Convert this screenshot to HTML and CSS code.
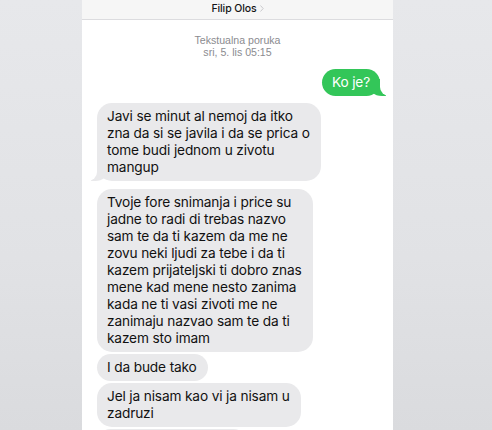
FILE: index.html
```html
<!DOCTYPE html>
<html lang="hr">
<head>
<meta charset="utf-8">
<title>Filip Olos</title>
<link rel="stylesheet" href="styles.css">
</head>
<body>
<div class="screen">
  <div class="panel">
    <header class="topbar">
      <span class="name">Filip Olos</span>
      <svg class="chev" width="4" height="7" viewBox="0 0 4 7"><path d="M0.5 0.5 L3.2 3.5 L0.5 6.5" fill="none" stroke="#c4c4c8" stroke-width="0.9"/></svg>
    </header>
    <div class="stamp">
      <div>Tekstualna poruka</div>
      <div>sri, 5. lis 05:15</div>
    </div>
    <div class="row out">
      <div class="bubble green tail-right">Ko je?</div>
    </div>
    <div class="row in first">
      <div class="bubble gray tail-left">Javi se minut al nemoj da itko<br>zna da si se javila i da se prica o<br>tome budi jednom u zivotu<br>mangup</div>
    </div>
    <div class="row in first">
      <div class="bubble gray">Tvoje fore snimanja i price su<br>jadne to radi di trebas nazvo<br>sam te da ti kazem da me ne<br>zovu neki ljudi za tebe i da ti<br>kazem prijateljski ti dobro znas<br>mene kad mene nesto zanima<br>kada ne ti vasi zivoti me ne<br>zanimaju nazvao sam te da ti<br>kazem sto imam</div>
    </div>
    <div class="row in">
      <div class="bubble gray">I da bude tako</div>
    </div>
    <div class="row in">
      <div class="bubble gray">Jel ja nisam kao vi ja nisam u<br>zadruzi</div>
    </div>
    <div class="row in">
      <div class="bubble gray stub"></div>
    </div>
  </div>
</div>
</body>
</html>
```

FILE: styles.css
```css
* { box-sizing: border-box; }
html, body {
  margin: 0;
  padding: 0;
  height: 430px;
  overflow: hidden;
}
body {
  background: linear-gradient(180deg, #e7e8eb 0%, #e1e2e5 60%, #dadbde 100%);
  font-family: "Liberation Sans", Arial, sans-serif;
}
.screen {
  display: flex;
  padding-left: 82px;
  height: 430px;
}
.panel {
  width: 311px;
  height: 430px;
  background: #ffffff;
  display: flex;
  flex-direction: column;
  overflow: hidden;
}
.topbar {
  height: 20px;
  flex: none;
  background: #f6f6f6;
  border-bottom: 1px solid #dcdcdf;
  display: flex;
  align-items: center;
  justify-content: center;
  gap: 3px;
  padding-bottom: 3px;
}
.name {
  font-family: Inter, "Liberation Sans", sans-serif;
  font-size: 10.5px;
  font-weight: 500;
  color: #151515;
  letter-spacing: -0.1px;
}
.chev { display: block; margin-top: 1px; }
.stamp {
  margin-top: 14px;
  text-align: center;
  font-size: 10.6px;
  line-height: 12px;
  color: #8b8b8f;
}
.row {
  display: flex;
  margin-top: 2px;
  flex: none;
}
.row.out {
  justify-content: flex-end;
  padding-right: 13px;
  margin-top: 11px;
}
.row.in {
  justify-content: flex-start;
  padding-left: 15px;
}
.row.in.first { margin-top: 7px; }
.row.in.first + .row.in.first { margin-top: 8px; }
.bubble {
  position: relative;
  font-family: Inter, "Liberation Sans", sans-serif;
  font-size: 13.7px;
  line-height: 17px;
  letter-spacing: -0.15px;
  padding: 5px 11px 5px 10px;
  border-radius: 15px;
  white-space: nowrap;
  z-index: 0;
  isolation: isolate;
}
.gray {
  background: #e9e9eb;
  color: #111111;
}
.stub {
  width: 150px;
  height: 27px;
}
.green {
  background: #33c659;
  color: #ffffff;
  padding: 5px 10px 5px 10px;
  border-radius: 14px;
}
.tail-left::before {
  content: "";
  position: absolute;
  bottom: 0;
  left: -6px;
  width: 18px;
  height: 17px;
  background: #e9e9eb;
  border-bottom-right-radius: 14px 12px;
  z-index: -1;
}
.tail-left::after {
  content: "";
  position: absolute;
  bottom: 0;
  left: -9px;
  width: 9px;
  height: 17px;
  background: #ffffff;
  border-bottom-right-radius: 9px;
}
.tail-right::before {
  content: "";
  position: absolute;
  bottom: 0;
  right: -6px;
  width: 18px;
  height: 17px;
  background: #33c659;
  border-bottom-left-radius: 14px 12px;
  z-index: -1;
}
.tail-right::after {
  content: "";
  position: absolute;
  bottom: 0;
  right: -9px;
  width: 9px;
  height: 17px;
  background: #ffffff;
  border-bottom-left-radius: 9px;
}
```
